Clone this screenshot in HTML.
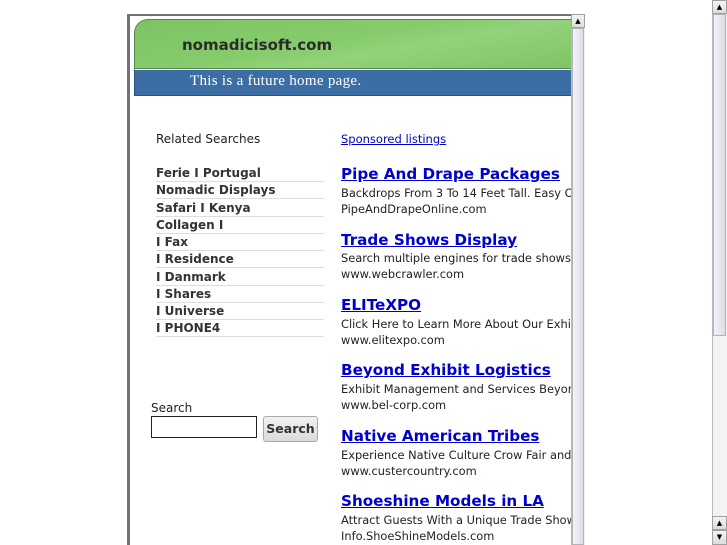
<!DOCTYPE html>
<html><head><meta charset="utf-8"><style>
*{margin:0;padding:0;box-sizing:border-box}
body{width:727px;height:545px;overflow:hidden;background:#fff;font-family:"DejaVu Sans","Liberation Sans",sans-serif;position:relative}
.a{position:absolute}
.frame{left:127px;top:14px;width:458px;height:531px;background:#6f7378}
.inner{left:130px;top:16px;width:441px;height:529px;background:#fff;overflow:hidden}
.head{left:4px;top:3px;width:440px;height:50px;border:1px solid #5a8a4a;border-right:none;border-radius:14px 0 0 0;background:linear-gradient(170deg,#7cc463 0%,#86cc6c 45%,#93d27a 60%,#7ec466 100%)}
.blue{left:4px;top:53px;width:440px;height:27px;background:#3a6ea5;border-top:1px solid #fff;border-bottom:1px solid #2a4f78;border-left:1px solid #2a4f78}
.sb{background:#eef0f4;border-left:1px solid #b8bcc2}
.btn{background:linear-gradient(#f4f4f4,#dcdcdc);border:1px solid #a0a0a0;font-size:7px;text-align:center;line-height:12px}
.li{left:156px;width:168px;height:17.2px;font-size:12px;font-weight:bold;color:#333;border-bottom:1px solid #ddd;line-height:16px}
.t{left:341px;font-size:15.2px;font-weight:bold;color:#00c;text-decoration:underline;white-space:nowrap}
.d{left:341px;font-size:11.4px;color:#222;white-space:nowrap;line-height:16px}
</style></head><body>
<div class="a frame"></div>
<div class="a inner">
 <div class="a head"></div>
 <div class="a" style="left:52px;top:20px;font-size:15px;font-weight:bold;color:#2b2b2b">nomadicisoft.com</div>
 <div class="a blue"></div>
 <div class="a" style="left:60px;top:57px;font-size:15px;color:#fff;font-family:'Liberation Serif',serif;letter-spacing:0.3px">This is a future home page.</div>
</div>
<div class="a" style="left:156px;top:132px;font-size:12px;color:#222">Related Searches</div>
<div class="a li" style="top:165px">Ferie I Portugal</div>
<div class="a li" style="top:182px">Nomadic Displays</div>
<div class="a li" style="top:199.5px">Safari I Kenya</div>
<div class="a li" style="top:216.5px">Collagen I</div>
<div class="a li" style="top:234px">I Fax</div>
<div class="a li" style="top:251px">I Residence</div>
<div class="a li" style="top:268.5px">I Danmark</div>
<div class="a li" style="top:285.5px">I Shares</div>
<div class="a li" style="top:303px">I Universe</div>
<div class="a li" style="top:320px">I PHONE4</div>
<div class="a" style="left:151px;top:401px;font-size:12px;color:#222">Search</div>
<div class="a" style="left:151px;top:416px;width:106px;height:22px;border:1px solid #222;background:#fff"></div>
<div class="a" style="left:263px;top:416px;width:55px;height:26px;border:1px solid #aaa;border-radius:3px;background:linear-gradient(#f2f2f2,#dadada);font-size:12.5px;font-weight:bold;color:#333;text-align:center;line-height:24px">Search</div>
<div class="a" style="left:341px;top:132px;font-size:11.5px;color:#00c;text-decoration:underline">Sponsored listings</div>
<div style="position:absolute;left:0;top:0;width:571px;height:545px;overflow:hidden">
<div class="a t" style="top:165px">Pipe And Drape Packages</div>
<div class="a d" style="top:185px">Backdrops From 3 To 14 Feet Tall. Easy One</div>
<div class="a d" style="top:201px">PipeAndDrapeOnline.com</div>
<div class="a t" style="top:231px">Trade Shows Display</div>
<div class="a d" style="top:250px">Search multiple engines for trade shows</div>
<div class="a d" style="top:266px">www.webcrawler.com</div>
<div class="a t" style="top:296px">ELITeXPO</div>
<div class="a d" style="top:316px">Click Here to Learn More About Our Exhibit</div>
<div class="a d" style="top:332px">www.elitexpo.com</div>
<div class="a t" style="top:361px">Beyond Exhibit Logistics</div>
<div class="a d" style="top:381px">Exhibit Management and Services Beyond</div>
<div class="a d" style="top:397px">www.bel-corp.com</div>
<div class="a t" style="top:427px">Native American Tribes</div>
<div class="a d" style="top:447px">Experience Native Culture Crow Fair and</div>
<div class="a d" style="top:463px">www.custercountry.com</div>
<div class="a t" style="top:492px">Shoeshine Models in LA</div>
<div class="a d" style="top:512px">Attract Guests With a Unique Trade Show</div>
<div class="a d" style="top:528px">Info.ShoeShineModels.com</div>
</div>
<div class="a sb" style="left:571px;top:14px;width:14px;height:531px"></div>
<div class="a btn" style="left:571px;top:14px;width:14px;height:14px">▲</div>
<div class="a" style="left:572px;top:28px;width:12px;height:517px;background:linear-gradient(90deg,#f4f4f8,#dcdde2);border:1px solid #b0b3b8"></div>
<div class="a sb" style="left:712px;top:0;width:15px;height:545px;background:#f4f4f4"></div>
<div class="a btn" style="left:712px;top:0;width:15px;height:14px">▲</div>
<div class="a" style="left:713px;top:14px;width:13px;height:322px;background:linear-gradient(90deg,#f4f4f8,#dcdde2);border:1px solid #b0b3b8"></div>
<div class="a btn" style="left:712px;top:516px;width:15px;height:14px">▲</div>
<div class="a btn" style="left:712px;top:530px;width:15px;height:15px">▼</div>
</body></html>
